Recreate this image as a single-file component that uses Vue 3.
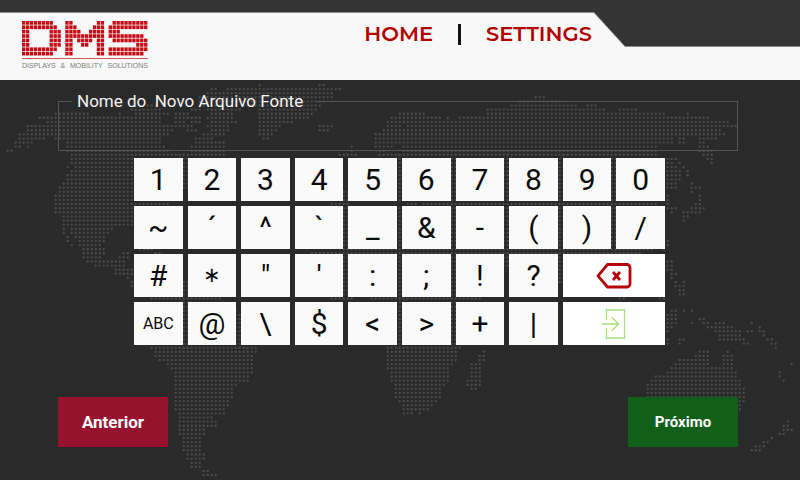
<script setup>
import { ref } from 'vue'

const fileName = ref('')

// Logo bitmap: each string is one row of dots.
const logoRows = [
  '########...##......##..#########',
  '#########..###....###.##########',
  '##.....###.####..####.###.......',
  '##.....###.##########.#########.',
  '##.....###.##.####.##..#########',
  '##.....###.##..##..##........###',
  '#########..##......##.##########',
  '########...##......##.#########.',
]
const logoDots = logoRows.flatMap((row, y) =>
  [...row].flatMap((c, x) => (c === '#' ? [{ x: x * 4, y: y * 4.4 }] : []))
)

// Dotted world map: every entry is one row, written as from-to spans of land.
const land = [
  '259 319-323',
  '210-215 227-254 259-339',
  '206-215 219-331',
  '199-330 537-545',
  '200-322 521-561',
  '147-155 200-230 243-319 513-577 589-594',
  '132-160 190-200 206-238 260-314 489-494 501-603 620-637',
  '55-88 119 135-168 175-187 210-230 259-310 401-423 489-665 689',
  '40-160 175-200 206-230 259-306 391-399 401-439 449 461-709',
  '48-160 175-185 190-200 213-235 259-290 387-443 449-729',
  '28-183 187-191 206-228 259-278 318-331 387-401 409-431 437-725 729-737',
  '28-173 187-195 213-227 259-275 318-327 382-399 405-721',
  '20-167 203-223 259-271 374-399 405-725',
  '20-32 36-44 56-159 195-210 262-267 374-399 405-673 681-685 701-717',
  '16-32 68-159 195-223 374-399 405-673 681-685 701-705',
  '15-20 28 68-165 191-223 350 374-390 405-657 701-709',
  '8-12 68-167 191-223 350 378-382 405-657 701-713',
  '72-200 203-224 338-354 378-657 705-713',
  '72-188 399-657 669-677 709-713',
  '72-188 399-657 669-673 681 713',
  '68 76-188 399-657 669-677 685',
  '72-188 399-657 669-681 689',
  '68-188 399-657 669-681 689',
  '68-188 399-657 669-681',
  '64-188 399-657 669-677 693',
  '60-188 399-657 669-677 693-701',
  '60-160 344-657 693',
  '56-160 344-657 669 701',
  '56-160 344-657 669 701',
  '56-168 333-347 409-415 425-657 669 697-701',
  '56-160 344-657 669-677 693-705',
  '56-160 344-657 673 685-701',
  '64-160 344-657 685-689',
  '64-160 344-657 685',
  '64-150 344-657',
  '64 72-112 344-657',
  '64 72-108 344-657',
  '68 76-104 344-657',
  '68 80-104 344-657 669',
  '72 80-100 344-657 669',
  '84-104 139-150 344-650 665',
  '84-104 124-128 155-159 310-640',
  '84-100 120-128 310-509 560-600',
  '88-124 330-509 560-600 669-673',
  '96-124 330-509 560-600 669-673',
  '116-132 330-500 560-590 669-673',
  '116-132 330-500 560-590 673-677',
  '128 330-500 560-580 673',
  '132 184-188 330-500 560-575 677 685',
  '132 184-188 330-500 677-685',
  '180-188 340-490 681-685',
  '160-200 340-490 681-685',
  '150-220 330-350 370-480 620-625 661-665',
  '150-225 380-470',
  '150-230 380-470',
  '150-235 380-460 673-677 685 693',
  '150-240 380-460 669-677',
  '150-240 380-460 669-677 701-705',
  '150-240 385-460 669-677 693 705-709 717-725 753',
  '150-240 385-460 669-673 709-733 761',
  '150-240 385-460 669 717-741 749-753 761-765',
  '150-240 385-460 721-741 765',
  '150-240 385-460 669 681-685 721-739 745 769-773',
  '150-240 385-460 669 681 745-749 773-777',
  '151-256 389-459 777',
  '155-256 389-457 482 701-709 729',
  '155-250 389-457 481-485 697-709 725-733',
  '159-163 167-250 386-457 478-485 681-709 725-733',
  '167-250 386-453 470-481 677-709 725-733 792',
  '171-250 386-448 470-481 673-733',
  '175-250 390-446 470-478 669-737 780',
  '175-247 390-446 470-478 657-737 780',
  '175-247 390-446 466-478 653-741 784',
  '175-235 394-442 466-478 649-741',
  '175-232 394-440 470-474 649-745',
  '175-232 394-438 649-745',
  '175-231 394-438 649-745',
  '175-228 398-434 649-745',
  '175-228 402-430 741',
  '175-224 402-426 741',
  '179-224 402-410 418',
  '179-210',
  '179-216 788',
  '179-216 785-789',
  '179-203 785-792',
  '179-203 781-785',
  '183-200 773',
  '183-200 765-769',
  '183-200 757-765',
  '183-200 753-761',
  '187-203',
  '187-203',
  '191-200',
  '191-200',
  '203-207',
  '203-215',
]
const snap = (v) => Math.round((v - 3.7) / 4) * 4 + 3.7
const mapPath = land
  .map((row, i) => {
    const y = (85 + i * 4.105).toFixed(1)
    return row
      .split(' ')
      .map((span) => {
        const [from, to = from] = span.split('-').map(Number)
        return `M${snap(from)} ${y}H${snap(to) + 0.1}`
      })
      .join('')
  })
  .join('')

const keys = [
  ...'1234567890',
  ...'~´^`_&-()/',
  ...'#∗"\':;!?',
  'backspace',
  'ABC',
  ...'@\\$<>+|',
  'enter',
]

function keyClass(key) {
  return {
    wide: key === 'backspace' || key === 'enter',
    small: key === 'ABC',
    medium: key === '∗',
  }
}

function press(key) {
  if (key === 'backspace') fileName.value = fileName.value.slice(0, -1)
  else if (key.length === 1) fileName.value += key
}
</script>

<template>
  <div class="page">
    <svg class="map" viewBox="0 0 800 480" preserveAspectRatio="xMidYMin slice" aria-hidden="true">
      <path :d="mapPath" />
    </svg>

    <header class="header">
      <div class="logo">
        <svg class="logo-mark" viewBox="0 0 128 35" preserveAspectRatio="none" aria-hidden="true">
          <rect v-for="(d, i) in logoDots" :key="i" :x="d.x" :y="d.y" width="3.4" height="3.7" />
        </svg>
        <div class="logo-text">
          <span>DISPLAYS</span><span>&amp;</span><span>MOBILITY</span><span>SOLUTIONS</span>
        </div>
      </div>
      <nav class="nav">
        <a href="#home">HOME</a>
        <span class="bar"></span>
        <a href="#settings">SETTINGS</a>
      </nav>
    </header>

    <main class="main">
      <fieldset class="field">
        <legend><label for="file-name">Nome do&nbsp; Novo Arquivo Fonte</label></legend>
        <input id="file-name" v-model="fileName" type="text" autocomplete="off" />
      </fieldset>

      <div class="keyboard">
        <button
          v-for="key in keys"
          :key="key"
          type="button"
          class="key"
          :class="keyClass(key)"
          @click="press(key)"
        >
          <svg v-if="key === 'backspace'" class="icon-back" viewBox="0 0 36 26" aria-hidden="true">
            <path d="M11.5 1.5H31a3 3 0 0 1 3 3V21a3 3 0 0 1-3 3H11.5L2 12.8Z" />
            <path d="M17 9l7 8M24 9l-7 8" />
          </svg>
          <svg v-else-if="key === 'enter'" class="icon-enter" viewBox="0 0 26 30" aria-hidden="true">
            <path d="M5.5 11V1h18v28h-18V19M1 15h16M11 8.500l6.500 6.500-6.500 6.500" />
          </svg>
          <template v-else>{{ key }}</template>
        </button>
      </div>

      <div class="actions">
        <button type="button" class="action prev">Anterior</button>
        <button type="button" class="action next">Próximo</button>
      </div>
    </main>
  </div>
</template>

<style>
body {
  background: #2a2a2a;
}
</style>

<style scoped>
.page {
  position: relative;
  min-height: 100vh;
  overflow: hidden;
  background: #2a2a2a;
  font-family: Roboto, "Liberation Sans", sans-serif;
}

.map {
  position: absolute;
  inset: 0;
  width: 100%;
  height: 100%;
}

.map path {
  fill: none;
  stroke: #4a4a4a;
  stroke-width: 2.4;
  stroke-linecap: round;
  stroke-dasharray: 0 4;
}

.header {
  position: relative;
  display: flex;
  box-sizing: border-box;
  height: 80px;
  padding: 21px 208px 0 22px;
  justify-content: space-between;
  align-items: flex-start;
  background: #343434;
}

.header::before,
.header::after {
  content: "";
  position: absolute;
  inset: 12px 0 0;
  background: #8a8a8a;
  clip-path: polygon(0 0, calc(100% - 206px) 0, calc(100% - 175px) 34px, 100% 34px, 100% 100%, 0 100%);
}

.header::after {
  inset: 13px 0 0;
  background: #f8f8f8;
}

.logo,
.nav {
  position: relative;
  z-index: 1;
}

.logo {
  width: 126px;
}

.logo-mark {
  display: block;
  width: 100%;
  height: 35px;
  fill: #c40d14;
}

.logo-text {
  display: flex;
  justify-content: space-between;
  margin-top: 2px;
  padding-top: 2px;
  border-top: 1px solid #d0545a;
  color: #7c807c;
  font-family: "Liberation Sans", sans-serif;
  font-size: 7px;
  line-height: 10px;
}

.nav {
  display: flex;
  align-items: center;
  gap: 25px;
  font: 600 21px/26px Montserrat, Inter, sans-serif;
}

.nav a {
  color: #b20000;
  text-decoration: none;
}

.bar {
  width: 3px;
  height: 21px;
  background: #111;
}

.main {
  position: relative;
  padding: 12px 62px 0 58px;
}

.field {
  box-sizing: border-box;
  height: 59px;
  min-width: 0;
  margin: 0;
  padding: 0 13px;
  border: 1px solid #555;
}

.field legend {
  padding: 0 12px 0 5px;
  color: #f4f4f4;
  font-size: 17px;
  line-height: 18px;
}

.field input {
  display: block;
  box-sizing: border-box;
  width: 100%;
  height: 36px;
  padding: 0;
  border: 0;
  outline: 0;
  background: transparent;
  color: #fff;
  font: 17px Roboto, sans-serif;
}

.keyboard {
  display: grid;
  grid-template-columns: repeat(10, 1fr);
  grid-auto-rows: 43px;
  gap: 5px;
  margin: 7px 73px 0 76px;
}

.key {
  display: flex;
  align-items: center;
  justify-content: center;
  min-width: 0;
  padding: 0;
  border: 0;
  background: #fafafa;
  color: #0a0a0a;
  font: 30px/43px Roboto, "DejaVu Sans", sans-serif;
}

.key.medium {
  font-size: 21px;
  font-weight: 500;
}

.key.small {
  font-size: 16px;
}

.key.wide {
  grid-column: span 2;
  background: #fff;
}

.key svg {
  fill: none;
}

.icon-back {
  width: 36px;
  height: 26px;
  stroke: #b50008;
  stroke-width: 2.8;
  stroke-linejoin: round;
}

.icon-enter {
  width: 26px;
  height: 30px;
  stroke: #a5e27c;
  stroke-width: 1.3;
}

.actions {
  display: flex;
  justify-content: space-between;
  margin-top: 52px;
}

.action {
  width: 110px;
  height: 50px;
  padding: 0;
  border: 0;
  color: #fff;
  font: 700 17px Roboto, sans-serif;
}

.prev {
  background: #96132f;
}

.next {
  background: #10601a;
  font-size: 15px;
}
</style>
